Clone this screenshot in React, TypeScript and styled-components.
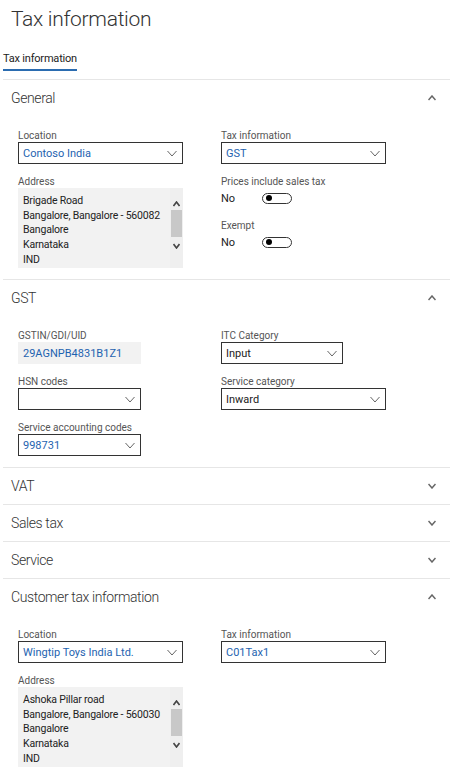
import React from "react";
import styled, { createGlobalStyle } from "styled-components";

const Global = createGlobalStyle`
  html, body { margin: 0; padding: 0; background: #fff; }
  body {
    font-family: Roboto, "Open Sans", sans-serif;
    color: #333;
    overflow: hidden;
  }
  * { box-sizing: border-box; }
`;

const Page = styled.div`
  width: 450px;
  height: 777px;
  overflow: hidden;
`;

const Title = styled.h1`
  margin: 0;
  padding: 5px 0 0 11px;
  font-size: 21px;
  font-weight: 300;
  line-height: 28px;
  letter-spacing: -0.3px;
  color: #333;
`;

const TabBar = styled.div`
  display: flex;
  padding-left: 3px;
  margin-top: 19px;
`;

const Tab = styled.div`
  font-size: 11px;
  line-height: 14px;
  letter-spacing: -0.2px;
  color: #222;
  padding-bottom: 3px;
  border-bottom: 2px solid #2b6cb0;
`;

const Sections = styled.div`
  margin: 8px 0 0 3px;
`;

const Section = styled.section`
  border-top: 1px solid #e6e6e6;
`;

const Header = styled.div`
  height: 36px;
  display: flex;
  align-items: center;
  justify-content: space-between;
  padding: 0 14px 0 8px;
  font-size: 14px;
  font-weight: 300;
  letter-spacing: -0.4px;
  color: #333;
`;

const Body = styled.div`
  display: grid;
  grid-template-columns: 203px 1fr;
  padding: 12px 0 11px 15px;
`;

const Column = styled.div`
  display: flex;
  flex-direction: column;
  gap: 10px;
`;

const Field = styled.div`
  display: flex;
  flex-direction: column;
`;

const Label = styled.div`
  font-size: 10px;
  line-height: 13px;
  padding-top: 1px;
  color: #555;
`;

const SelectBox = styled.div<{ $w: number }>`
  width: ${(p) => p.$w}px;
  height: 22px;
  border: 1px solid #333;
  display: flex;
  align-items: center;
  justify-content: space-between;
  padding: 0 5px 0 4px;
  background: #fff;
`;

const Value = styled.span<{ $link?: boolean }>`
  font-size: 11px;
  color: ${(p) => (p.$link ? "#1e63b0" : "#222")};
  white-space: nowrap;
`;

const ReadOnly = styled.div<{ $w: number }>`
  width: ${(p) => p.$w}px;
  height: 22px;
  background: #f2f2f2;
  display: flex;
  align-items: center;
  padding-left: 5px;
`;

const AddressBox = styled.div`
  width: 165px;
  height: 80px;
  background: #f2f2f2;
  display: flex;
`;

const AddressText = styled.div`
  flex: 1;
  padding: 6px 0 0 5px;
  font-size: 10.5px;
  line-height: 14.7px;
  letter-spacing: -0.2px;
  color: #222;
  white-space: nowrap;
  overflow: hidden;
`;

const Scrollbar = styled.div`
  width: 13px;
  background: #efefef;
  display: flex;
  flex-direction: column;
  align-items: center;
  padding-top: 13px;
`;

const Thumb = styled.div`
  width: 11px;
  height: 27px;
  background: #c8c8c8;
  margin: 3px 0 6px;
`;

const ToggleRow = styled.div`
  display: flex;
  align-items: center;
  height: 20px;
`;

const ToggleText = styled.span`
  font-size: 11px;
  color: #222;
  width: 41px;
`;

const Toggle = styled.div`
  width: 30px;
  height: 11px;
  border: 1.5px solid #333;
  border-radius: 6px;
  display: flex;
  align-items: center;
  padding-left: 3px;
`;

const Knob = styled.div`
  width: 6px;
  height: 6px;
  border-radius: 50%;
  background: #000;
`;

const Chevron = ({ up, color = "#666", w = 9, h = 5, sw = 1 }: { up?: boolean; color?: string; w?: number; h?: number; sw?: number }) => (
  <svg width={w} height={h + 2} viewBox={`0 0 ${w} ${h + 2}`} style={{ display: "block" }}>
    <polyline
      points={up ? `0.5,${h + 1} ${w / 2},1 ${w - 0.5},${h + 1}` : `0.5,1 ${w / 2},${h + 1} ${w - 0.5},1`}
      fill="none"
      stroke={color}
      strokeWidth={sw}
    />
  </svg>
);

const Select = ({ w, value, link }: { w: number; value?: string; link?: boolean }) => (
  <SelectBox $w={w}>
    <Value $link={link}>{value}</Value>
    <Chevron w={10} h={5} color="#555" sw={0.9} />
  </SelectBox>
);

const Address = ({ lines }: { lines: string[] }) => (
  <AddressBox>
    <AddressText>
      {lines.map((l, i) => (
        <div key={i}>{l}</div>
      ))}
    </AddressText>
    <Scrollbar>
      <Chevron up w={7} h={4} color="#444" sw={1.6} />
      <Thumb />
      <Chevron w={7} h={4} color="#444" sw={1.6} />
    </Scrollbar>
  </AddressBox>
);

const SwitchField = ({ label }: { label: string }) => (
  <Field>
    <Label>{label}</Label>
    <ToggleRow>
      <ToggleText>No</ToggleText>
      <Toggle>
        <Knob />
      </Toggle>
    </ToggleRow>
  </Field>
);

const SectionHeader = ({ title, open }: { title: string; open?: boolean }) => (
  <Header>
    <span>{title}</span>
    <Chevron up={open} w={8} h={4} color="#666" sw={1.5} />
  </Header>
);

export default function App() {
  return (
    <Page>
      <Global />
      <Title>Tax information</Title>
      <TabBar>
        <Tab>Tax information</Tab>
      </TabBar>
      <Sections>
        <Section>
          <SectionHeader title="General" open />
          <Body>
            <Column>
              <Field>
                <Label>Location</Label>
                <Select w={165} value="Contoso India" link />
              </Field>
              <Field>
                <Label>Address</Label>
                <Address lines={["Brigade Road", "Bangalore, Bangalore - 560082", "Bangalore", "Karnataka", "IND"]} />
              </Field>
            </Column>
            <Column>
              <Field>
                <Label>Tax information</Label>
                <Select w={165} value="GST" link />
              </Field>
              <SwitchField label="Prices include sales tax" />
              <SwitchField label="Exempt" />
            </Column>
          </Body>
        </Section>
        <Section>
          <SectionHeader title="GST" open />
          <Body>
            <Column>
              <Field>
                <Label>GSTIN/GDI/UID</Label>
                <ReadOnly $w={123}>
                  <Value $link>29AGNPB4831B1Z1</Value>
                </ReadOnly>
              </Field>
              <Field>
                <Label>HSN codes</Label>
                <Select w={123} />
              </Field>
              <Field>
                <Label>Service accounting codes</Label>
                <Select w={123} value="998731" link />
              </Field>
            </Column>
            <Column>
              <Field>
                <Label>ITC Category</Label>
                <Select w={122} value="Input" />
              </Field>
              <Field>
                <Label>Service category</Label>
                <Select w={165} value="Inward" />
              </Field>
            </Column>
          </Body>
        </Section>
        <Section>
          <SectionHeader title="VAT" />
        </Section>
        <Section>
          <SectionHeader title="Sales tax" />
        </Section>
        <Section>
          <SectionHeader title="Service" />
        </Section>
        <Section>
          <SectionHeader title="Customer tax information" open />
          <Body>
            <Column>
              <Field>
                <Label>Location</Label>
                <Select w={165} value="Wingtip Toys India Ltd." link />
              </Field>
              <Field>
                <Label>Address</Label>
                <Address lines={["Ashoka Pillar road", "Bangalore, Bangalore - 560030", "Bangalore", "Karnataka", "IND"]} />
              </Field>
            </Column>
            <Column>
              <Field>
                <Label>Tax information</Label>
                <Select w={165} value="C01Tax1" link />
              </Field>
            </Column>
          </Body>
        </Section>
      </Sections>
    </Page>
  );
}
